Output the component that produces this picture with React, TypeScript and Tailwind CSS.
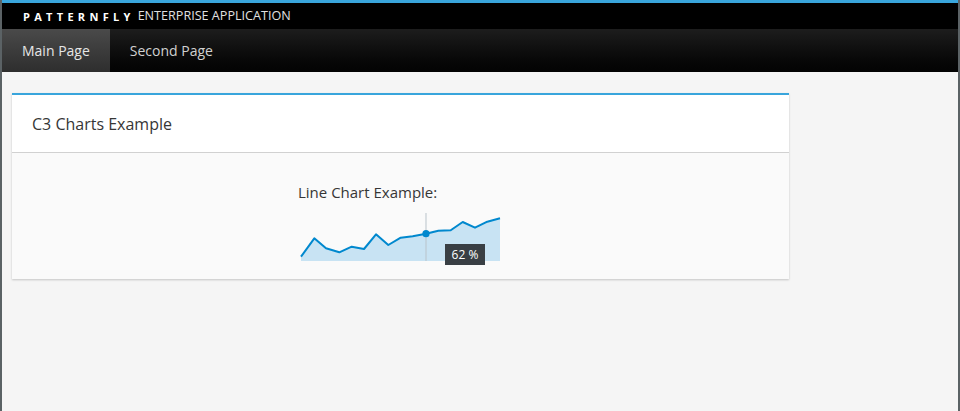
import React from "react";

const pts: [number, number][] = [
  [1, 46.7], [14.3, 28.3], [26, 38.3], [39.3, 42.3], [51.7, 36.7], [64, 39],
  [76, 24.3], [88.3, 35], [100.7, 27.7], [112.7, 26.3], [126, 23.7], [138.3, 20.7],
  [150.7, 20.3], [162.7, 12], [175, 17.7], [187.3, 11.7], [200, 8.3],
];

function Chart() {
  const line = pts.map((p, i) => `${i === 0 ? "M" : "L"}${p[0]},${p[1]}`).join(" ");
  const area = `${line} L200,51 L1,51 Z`;
  return (
    <div className="relative w-[204px] h-[56px]">
      <svg width="204" height="56" viewBox="0 0 204 56" className="block">
        <path d={area} fill="#c8e3f3" />
        <line x1="126" y1="3" x2="126" y2="51" stroke="#b9c3ca" strokeWidth="1" />
        <path d={line} fill="none" stroke="#0088ce" strokeWidth="2" strokeLinejoin="round" />
        <circle cx="126" cy="23.7" r="3.6" fill="#0088ce" />
      </svg>
      <div className="absolute left-[145px] top-[34px] w-[40px] h-[21px] bg-[#393f44] text-white text-[12px] leading-[21px] text-center">
        62 %
      </div>
    </div>
  );
}

export default function App() {
  return (
    <div
      className="h-[411px] border-x-2 border-[#5b6265] bg-[#f5f5f5] flex flex-col overflow-hidden"
      style={{ fontFamily: '"Open Sans", "Noto Sans", sans-serif' }}
    >
      <div className="border-t-[3px] border-[#39a5dc] bg-black h-[29px] flex items-center pl-[21px] gap-[3px]">
        <span className="text-white font-bold text-[11px] tracking-[0.39em] leading-none">PATTERNFLY</span>
        <span className="text-[#e0e0e0] text-[12.6px] leading-none">ENTERPRISE APPLICATION</span>
      </div>
      <div className="h-[43px] flex bg-gradient-to-b from-[#1d1d1d] to-[#030303]">
        <div className="h-full px-[20px] flex items-center text-[14px] text-[#e6e6e6] bg-gradient-to-b from-[#4a4a4a] to-[#2e2e2e]">
          Main Page
        </div>
        <div className="h-full px-[20px] flex items-center text-[14px] text-[#d1d1d1]">
          Second Page
        </div>
      </div>
      <div className="pt-[21px] px-[10px]">
        <div className="w-[777px] border-t-2 border-[#39a5dc] bg-white shadow-[0_1px_2px_rgba(0,0,0,0.2)]">
          <div className="h-[58px] flex items-center px-[20px] text-[16px] text-[#363636] border-b border-[#d1d1d1]">
            C3 Charts Example
          </div>
          <div className="bg-[#fafafa] h-[126px] flex justify-center pt-[29px]">
            <div className="flex flex-col ml-[3px]">
              <div className="text-[15px] leading-[20px] text-[#363636] ml-[-2px]">Line Chart Example:</div>
              <div className="mt-[8px]">
                <Chart />
              </div>
            </div>
          </div>
        </div>
      </div>
    </div>
  );
}
